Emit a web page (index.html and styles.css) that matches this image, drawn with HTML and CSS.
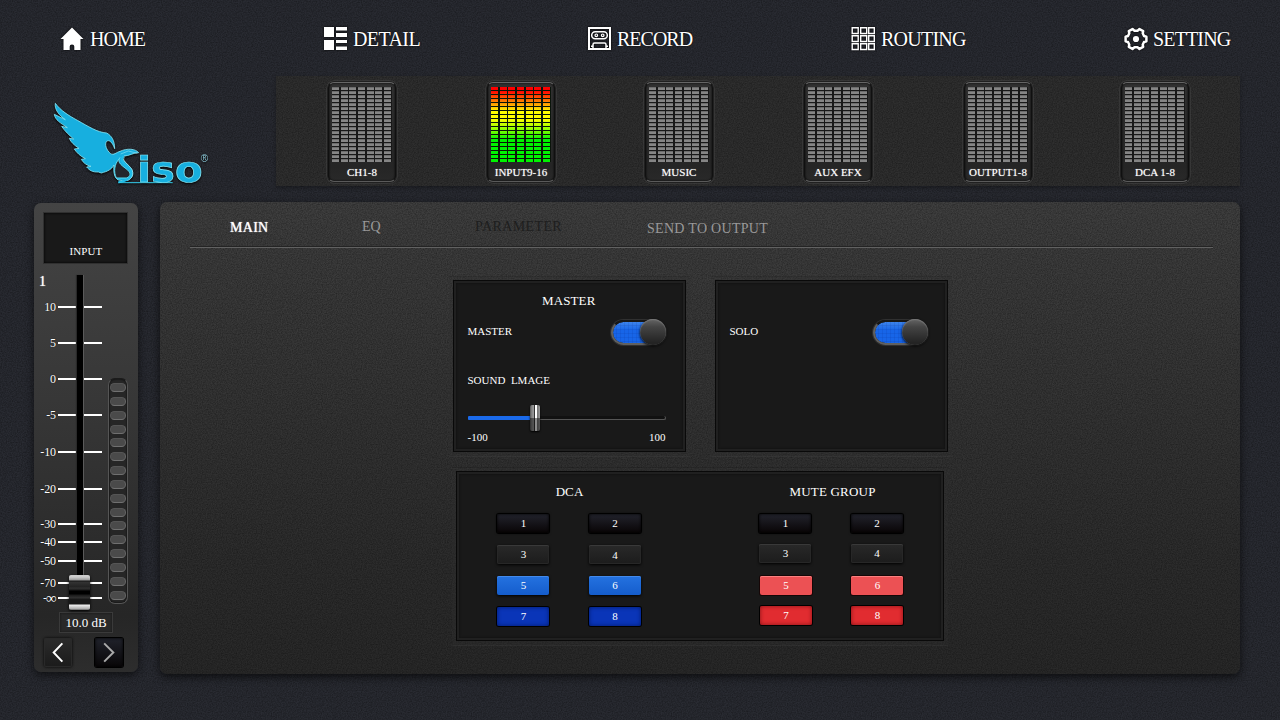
FILE: index.html
```html
<!DOCTYPE html>
<html lang="en">
<head>
<meta charset="utf-8">
<title>SISO Mixer</title>
<link rel="stylesheet" href="styles.css">
</head>
<body>
<nav class="topnav">
  <a class="nav-item"><svg class="ico" viewBox="0 0 24 24"><path fill="#fff" d="M12 0.5 0.5 12h3v11h6.200v-3.600q0-2 2.300-2t2.300 2V23h6.200V12h3z"/></svg>HOME</a>
  <a class="nav-item detail"><svg class="ico" viewBox="0 0 24 24"><path fill="#fff" d="M1 0h10v10H1zM13 0h11v3.500H13zM13 6h11v4H13zM1 13h10v10H1zM13 13h11v3H13zM13 19.500h11V23H13z"/></svg>DETAIL</a>
  <a class="nav-item"><svg class="ico" viewBox="0 0 24 24" fill="none" stroke="#fff"><path stroke-width="2" d="M2 1h21v21H2z"/><rect x="4.700" y="4.700" width="15.600" height="7" rx="3.500" stroke-width="1.500"/><circle cx="9.300" cy="8.300" r="1.300" stroke-width="1.200"/><circle cx="15.700" cy="8.300" r="1.300" stroke-width="1.200"/><path stroke-width="1.500" d="M6 21v-3.500q0-1.500 1.500-1.500h10q1.500 0 1.500 1.500V21M4 19.300h2M19 19.300h2"/></svg>RECORD</a>
  <a class="nav-item routing"><svg class="ico" viewBox="0 0 24 24" fill="none" stroke="#fff" stroke-width="1.400"><path d="M1.200.7h6v5.800h-6zM9.700.7h6v5.800h-6zM17.700.7h5.600v5.800h-5.600zM1.200 8.700h6v5.800h-6zM9.700 8.700h6v5.800h-6zM17.700 8.700h5.600v5.800h-5.600zM1.200 16.700h6v5.800h-6zM9.700 16.700h6v5.800h-6zM17.700 16.700h5.600v5.800h-5.600z"/></svg>ROUTING</a>
  <a class="nav-item setting"><svg class="ico" viewBox="0 0 24 24"><path fill="none" stroke="#fff" stroke-width="2.500" stroke-linejoin="round" d="M22.400 9.700V14.300L20 15 18.700 17.700 19.200 19.900 15.500 21.900 13.500 20.300H10.500L8.500 21.900 4.800 19.900 5.300 17.700 4 15 1.600 14.300V9.700L4 9 5.300 6.300 4.800 4.100 8.500 2.100 10.500 3.700H13.500L15.500 2.100 19.200 4.100 18.700 6.300 20 9z"/><circle cx="12" cy="12" r="3.100" fill="#fff"/></svg>SETTING</a>
</nav>

<header class="band">
  <div class="logo">
    <svg viewBox="0 0 540 330" width="180" height="110">
      <g fill="#17afdf" stroke="#85e6f5" stroke-width="2.500" stroke-linejoin="round">
        <path d="M46 40C62 62 85 76 112 91C145 109 171 127 200 129C215 137 224 152 224 176C217 157 208 148 200 154C193 162 199 181 212 191C221 197 229 187 240 184C262 174 286 176 296 188C280 188 268 198 252 198C239 209 267 222 276 239C285 261 268 278 235 270C222 264 220 243 222 225C214 239 203 244 184 249L175 246C158 247 148 241 140 231L153 229C140 226 130 219 124 208L136 206C120 198 109 187 103 177L117 175C103 166 92 156 88 145L101 147C89 137 73 122 65 109L82 113C62 99 45 90 43 73L76 89C57 76 43 58 46 40Z"/>
      </g>
      <path fill="#23262c" stroke="#5fdcf2" stroke-width="3" d="M237 207C223 222 220 246 229 264H259C274 260 272 248 263 240C250 229 228 218 240 202"/>
      <path fill="none" stroke="#20bce8" stroke-width="6" d="M251 198C234 216 262 224 272 242C280 263 261 273 235 277"/>
      <path fill="none" stroke="#a9f1fa" stroke-width="1.500" d="M255 199C242 214 268 223 277 241C282 257 272 269 262 272M242 192 265 183 292 190"/>
      <path fill="none" stroke="#35cdec" stroke-width="3" d="M235 278H398"/>
      <text class="logo-word" x="292" y="277" textLength="196" lengthAdjust="spacingAndGlyphs">iso</text>
      <text class="logo-reg" x="482" y="215">®</text>
    </svg>
  </div>
  <div class="meters">
    <div class="meter"><div class="bars"></div><span>CH1-8</span></div>
    <div class="meter lit"><div class="bars"></div><span>INPUT9-16</span></div>
    <div class="meter"><div class="bars"></div><span>MUSIC</span></div>
    <div class="meter"><div class="bars"></div><span>AUX EFX</span></div>
    <div class="meter"><div class="bars"></div><span>OUTPUT1-8</span></div>
    <div class="meter"><div class="bars"></div><span>DCA 1-8</span></div>
  </div>
</header>

<div class="work">
  <aside class="strip">
    <div class="name">INPUT</div>
    <div class="chan">1</div>
    <div class="fader">
      <div class="scale">
        <p>10</p><p>5</p><p>0</p><p>-5</p><p>-10</p><p>-20</p><p>-30</p><p>-40</p><p>-50</p><p>-70</p><p>-<i>∞</i></p>
        <div class="track"></div>
        <div class="cap"></div>
      </div>
      <div class="leds"><b></b><b></b><b></b><b></b><b></b><b></b><b></b><b></b><b></b><b></b><b></b><b></b><b></b><b></b><b></b><b></b></div>
    </div>
    <div class="db">10.0 dB</div>
    <div class="arrows">
      <button class="arrow"><svg viewBox="0 0 28 30"><path d="M18.500 5.500 9.500 15l9 9.500" stroke="#fff"/></svg></button>
      <button class="arrow pressed"><svg viewBox="0 0 28 30"><path d="M9 5.500l9.500 9.500L9 24.500" stroke="#aaa"/></svg></button>
    </div>
  </aside>

  <main class="main">
    <div class="tabs">
      <span class="tab active">MAIN</span><span class="tab eq">EQ</span><span class="tab off">PARAMETER</span><span class="tab send">SEND TO OUTPUT</span>
    </div>
    <div class="panels">
      <section class="panel master">
        <h2>MASTER</h2>
        <div class="row"><span>MASTER</span><div class="toggle"><i></i></div></div>
        <div class="sound">SOUND&nbsp; LMAGE</div>
        <div class="slider"><div class="fill"></div><div class="thumb"></div></div>
        <div class="range"><span>-100</span><span>100</span></div>
      </section>
      <section class="panel solo">
        <div class="row"><span>SOLO</span><div class="toggle"><i></i></div></div>
      </section>
    </div>
    <section class="panel groups">
      <div class="group">
        <h2>DCA</h2>
        <div class="keys">
          <button class="dark">1</button><button class="dark">2</button>
          <button class="grey">3</button><button class="grey low">4</button>
          <button class="blue">5</button><button class="blue">6</button>
          <button class="navy">7</button><button class="navy">8</button>
        </div>
      </div>
      <div class="group mute">
        <h2>MUTE GROUP</h2>
        <div class="keys">
          <button class="dark">1</button><button class="dark">2</button>
          <button class="grey">3</button><button class="grey">4</button>
          <button class="coral">5</button><button class="coral">6</button>
          <button class="red">7</button><button class="red">8</button>
        </div>
      </div>
    </section>
  </main>
</div>
</body>
</html>
```

FILE: styles.css
```css
:root {
  --noise: url("data:image/svg+xml,%3Csvg xmlns='http://www.w3.org/2000/svg' width='200' height='200'%3E%3Cfilter id='n' x='0' y='0' width='1' height='1'%3E%3CfeTurbulence type='fractalNoise' baseFrequency='.8' numOctaves='2' stitchTiles='stitch'/%3E%3CfeColorMatrix values='0 0 0 0 0 0 0 0 0 0 0 0 0 0 0 .9 0 0 0 -.26'/%3E%3C/filter%3E%3Crect width='200' height='200' filter='url(%23n)' opacity='.65'/%3E%3C/svg%3E");
}
* { box-sizing: border-box; }
body {
  margin: 0;
  width: 1280px;
  height: 720px;
  overflow: hidden;
  color: #fff;
  font-family: "Liberation Serif", "Times New Roman", serif;
  background: var(--noise), #292b32;
}
h2, p { margin: 0; font-weight: normal; }
button { border: 0; padding: 0; font: inherit; color: inherit; }

/* top navigation */
.topnav {
  display: grid;
  grid-template-columns: 263px 264px 264px 273px auto;
  height: 76px;
  padding: 2px 0 0 60px;
  align-items: center;
}
.nav-item {
  display: flex;
  align-items: center;
  gap: 6px;
  font-size: 20px;
  letter-spacing: -1px;
  line-height: 24px;
  text-shadow: 0 0 2px #000;
}
.nav-item.detail { letter-spacing: -.6px; }
.nav-item.routing { letter-spacing: -.75px; }
.nav-item.setting { gap: 5px; letter-spacing: -.85px; }
.ico { width: 24px; height: 24px; overflow: visible; filter: drop-shadow(0 0 1px #000); }

/* logo and meter band */
.band { display: flex; height: 110px; }
.logo { width: 276px; padding: 14px 0 0 40px; filter: drop-shadow(0 1px 1px #000); }
.logo svg { display: block; }
.logo-word {
  font: bold 108px "DejaVu Sans", sans-serif;
  fill: #17afdf;
  stroke: #85e6f5;
  stroke-width: 2;
}
.logo-reg { font: 30px "Liberation Sans", sans-serif; fill: #8cc9d8; }
.meters {
  width: 964px;
  padding: 6px 0 0 52px;
  display: grid;
  grid-template-columns: 159px 158px 159px 160px 157px 68px;
  background: var(--noise), #2f2f2f;
  box-shadow: 0 2px 4px rgba(0,0,0,.3);
}
.meter {
  width: 68px;
  height: 100px;
  padding: 4px 4px 0;
  border-radius: 6px;
  background: linear-gradient(#303030, #252525 85%, #292929);
  border: 1px solid #101010;
  border-top-color: #666;
  border-bottom-color: #5a5a5a;
  box-shadow: 0 0 0 1px #202020, 0 0 0 1.500px #444, inset 0 0 2px #000;
}
.meter span {
  display: block;
  margin: 4px -8px 0;
  font-size: 11px;
  line-height: 13px;
  text-align: center;
  white-space: nowrap;
  text-shadow: 0 0 1px #aaa;
}
.bars {
  height: 75px;
  width: 60px;
  margin-left: -1px;
  background:
    repeating-linear-gradient(90deg, transparent 0 7px, #181818 7px 8.700px),
    repeating-linear-gradient(transparent 0 3px, #181818 3px 4px),
    repeating-linear-gradient(#6c6c6c 0 1px, #858585 1px 4px);
}
.lit .bars {
  background:
    repeating-linear-gradient(90deg, transparent 0 7px, #0b150b 7px 8.700px),
    repeating-linear-gradient(transparent 0 3px, #091409 3px 4px),
    linear-gradient(#f00 5%, #ff8500 20%, #ff0 33%, #ff0 43%, #8f0 57%, #00f400 70%);
}

/* channel strip */
.work { display: flex; gap: 22px; padding: 16px 0 0 34px; align-items: flex-start; }
.strip {
  width: 104px;
  height: 469px;
  margin-top: 1px;
  padding: 10px 10px 0;
  border-radius: 7px;
  background: linear-gradient(#444, #363636 45%, #262626 88%, #2d2d2d);
  box-shadow: 0 3px 9px rgba(0,0,0,.6);
}
.name {
  height: 50px;
  margin-right: 1px;
  padding: 32px 0 0 1px;
  background: #191919;
  box-shadow: 0 0 0 1px #303030, inset 0 0 3px #000;
  font-size: 11px;
  line-height: 13px;
  letter-spacing: .1px;
  text-align: center;
}
.chan { margin: 11px 0 0 -5px; font-size: 14px; line-height: 15px; height: 26px; text-shadow: 0 0 1px #fff; }
.fader { display: flex; height: 312px; margin-left: -10px; }
.scale {
  position: relative;
  width: 74px;
  display: grid;
  grid-template-rows: 35.500px 36px 36.500px 37px 37px 35px 18px 19px 22px 15px 16px;
}
.scale p {
  display: grid;
  grid-template-columns: 22px 44px;
  gap: 2px;
  height: 15px;
  align-items: center;
  justify-items: end;
  font-size: 12px;
  line-height: 15px;
  letter-spacing: -.1px;
  width: 68px;
  text-shadow: 0 0 1px #000;
}
.scale p:last-of-type { grid-template-columns: auto auto 44px; justify-content: end; gap: 0; }
.scale p:last-of-type::after { margin-left: 2px; }
.scale i { font-style: normal; font-size: 15px; width: 12px; margin-left: -1px; }
.scale p::after { content: ""; width: 44px; height: 2px; background: #fff; margin-top: -1px; }
.track {
  position: absolute;
  left: 43px;
  top: -25px;
  width: 6px;
  height: 325px;
  background: #000;
  box-shadow: 1px 0 0 #5a5a5a, -1px 0 1px #292929;
}
.cap {
  position: absolute;
  left: 35px;
  top: 275px;
  width: 21px;
  height: 35px;
  border-radius: 2px;
  background: linear-gradient(#ccc 0 2px, #999 5px, #111 6px, #333 7px, #222 12px, #333 13px, #1a1a1a 15px, #000 16px 19px, #1a1a1a 20px, #333 23px, #181818 24px 29px, #eee 30px, #aaa 34px, #555);
  box-shadow: 0 1px 3px #000;
}
.leds {
  width: 21px;
  height: 226px;
  margin: 78px 0 0 2.500px;
  padding: 4px 1.500px 0;
  border-radius: 7px;
  background: #262626;
  border: 1px solid #555;
  border-top-color: #1b1b1b;
  box-shadow: inset 0 0 2px #000;
  display: grid;
  grid-template-rows: repeat(16, 13.850px);
}
.leds b { height: 9px; border-radius: 5px; background: #4a4a4a; border: 1px solid #555; border-bottom-color: #707070; border-right-color: #666; }
.db {
  width: 54px;
  height: 21px;
  margin: 0 0 0 15px;
  border: 1px solid #3a3a3a;
  box-shadow: inset 0 0 2px #111;
  background: #292929;
  text-align: center;
  font-size: 13px;
  line-height: 19px;
  white-space: nowrap;
}
.arrows { display: flex; justify-content: space-between; margin: 5px 5px 0 0; }
.arrow { width: 28px; height: 29px; border-radius: 2px; background: linear-gradient(#2b2b2b, #1b1b1b); box-shadow: 0 0 3px #000, inset 0 0 0 1px #292929; }
.arrow.pressed { background: linear-gradient(#20222b, #080607); box-shadow: 0 0 0 1px #000, inset 0 0 3px #000; }
.arrow svg { display: block; width: 28px; height: 29px; fill: none; stroke-width: 2; }

/* main area */
.main {
  width: 1080px;
  height: 472px;
  padding: 14px 27px 0 30px;
  border-radius: 7px;
  background: var(--noise), linear-gradient(#404040, #3a3a3a 20%, #2d2d2d 75%, #292929);
  box-shadow: 0 3px 8px rgba(0,0,0,.65);
}
.tabs {
  display: grid;
  grid-template-columns: 132px 113px 172px auto;
  height: 32px;
  padding-left: 40px;
  border-bottom: 1px solid #616161;
  box-shadow: inset 0 -1px #242424;
  font-size: 14px;
  line-height: 22px;
}
.tab { color: #999; white-space: nowrap; }
.tab.active { color: #fff; letter-spacing: .3px; text-shadow: 0 0 1px #fff; padding-top: 1px; }
.tab.off { color: #1e1e1e; letter-spacing: .4px; }
.tab.send { letter-spacing: .3px; padding-top: 2px; }
.panels { display: flex; gap: 29px; padding: 32px 0 0 263px; }
.panel {
  background: #191919;
  border: 1px solid #090909;
  box-shadow: inset 0 0 0 2px #202020, inset 0 1px 0 1px #303030, inset 0 0 2px 3px #141414, 0 0 0 4px rgba(0,0,0,.12), 0 1px 0 4px rgba(90,90,90,.18);
}
.panel h2 { font-size: 13px; line-height: 16px; text-align: center; letter-spacing: .1px; }
.master, .solo { width: 233px; height: 172px; padding: 12px 19px 0 13.500px; font-size: 11px; }
.master h2 { margin-right: -4px; }
.row { display: flex; justify-content: space-between; align-items: center; height: 25px; margin-top: 11px; }
.row span { margin-top: -3px; }
.solo .row { margin-top: 27px; }
.toggle {
  width: 55px;
  height: 25px;
  border-radius: 13px;
  display: flex;
  justify-content: flex-end;
  background:
    repeating-linear-gradient(90deg, transparent 0 3px, rgba(0,30,120,.1) 3px 4px),
    repeating-linear-gradient(transparent 0 3px, rgba(0,30,120,.1) 3px 4px),
    linear-gradient(#3d83eb, #1765e8 40%);
  background-clip: padding-box;
  border: 2px solid #606060;
  border-top-color: #171717;
  box-shadow: 0 0 0 1px #303030;
}
.toggle i { width: 26px; height: 26px; margin: -3px -2px 0 0; border-radius: 50%; background: linear-gradient(#666, #444 30%, #242424 90%); box-shadow: 0 1px 3px #000, inset 0 1px 1px #777; }
.sound { margin-top: 28px; line-height: 14px; }
.slider { position: relative; height: 4px; width: 198px; margin-top: 29px; background: #111; border-bottom: 1px solid #555; border-right: 1px solid #555; border-radius: 2px; }
.fill { width: 66px; height: 4px; background: #1a6aeb; border-radius: 1px; }
.thumb { position: absolute; left: 62px; top: -11px; width: 10px; height: 26px; border-radius: 2px; background: linear-gradient(transparent 50%, rgba(0,0,0,.45) 52%), linear-gradient(90deg, #555, #888 20%, #999 38%, #333 45%, #fff 50% 70%, #777 75%, #999); box-shadow: 0 1px 2px #000; }
.range { display: flex; justify-content: space-between; margin-top: 11px; width: 198px; line-height: 13px; }
.groups { width: 488px; height: 170px; margin: 19px 0 0 266px; padding: 12px 0 0 40px; display: flex; gap: 117px; }
.group { width: 145px; }
.mute h2 { margin: 0 0 0 2px; letter-spacing: .2px; }
.keys { display: grid; grid-template-columns: 52px 52px; gap: 12px 39.500px; margin-top: 14px; font-size: 11px; line-height: 19px; }
.keys button { height: 19px; border-radius: 2px; box-shadow: 0 1px 3px #000; text-align: center; line-height: 19px; padding-left: 1px; }
.keys .dark { background: linear-gradient(#22232c, #080405); box-shadow: 0 0 0 1px #000, 0 0 3px #000, inset 0 0 3px #000; }
.keys .grey { background: linear-gradient(#292929, #1c1c1c); box-shadow: inset 0 1px #393939, inset 0 0 0 1px #272727, 0 1px 3px #000; }
.mute .grey { margin: -1px 0 1px; }
.keys .low { padding-top: 1px; }
.keys .blue { background: linear-gradient(#2472e0, #155dcc); box-shadow: inset 0 1px #438aeb, 0 1px 3px #000; }
.keys .navy { background: #0a35b8; box-shadow: 0 0 0 1px #000, inset 0 0 4px #001a66; }
.keys .coral { background: #ec5154; box-shadow: inset 0 1px #fb8080, 0 0 0 1px #160606; }
.keys .red { background: #e12c30; box-shadow: 0 0 0 1px #000, inset 0 0 4px #801015; }
.mute .coral, .mute .red { margin-left: .5px; margin-right: -.5px; }
.mute .red { margin-top: -1px; margin-bottom: 1px; }
```
